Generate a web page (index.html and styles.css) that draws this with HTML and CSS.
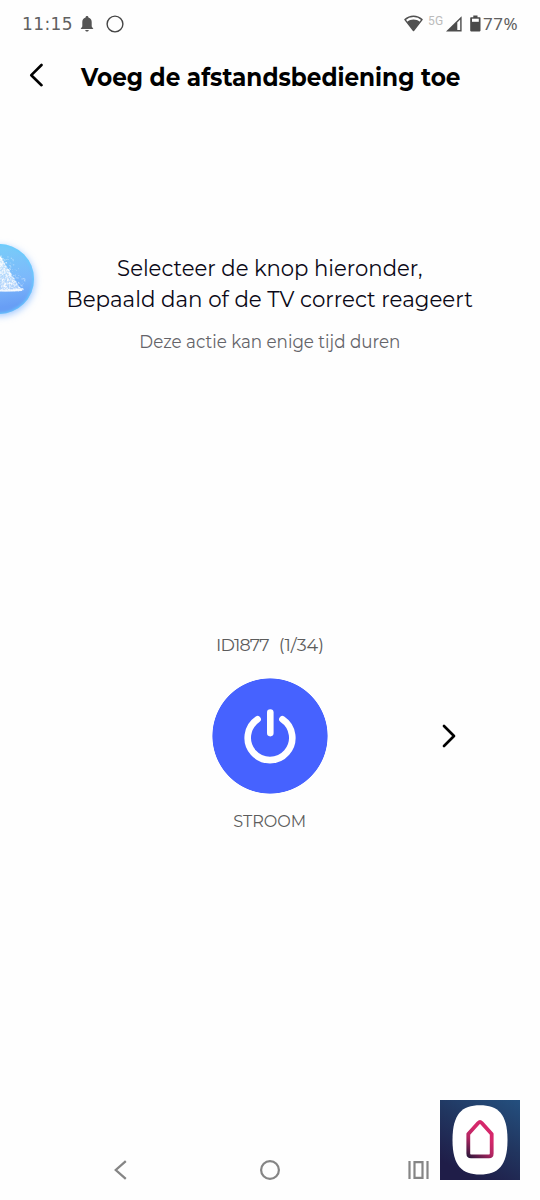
FILE: index.html
```html
<!DOCTYPE html>
<html lang="nl">
<head>
<meta charset="utf-8">
<title>Voeg de afstandsbediening toe</title>
<link rel="stylesheet" href="styles.css">
</head>
<body>
<div class="screen">
  <div class="status">
    <span class="clock">11:15</span>
    <svg class="bell" width="14" height="16" viewBox="0 0 14 16"><path d="M7 0c.9 0 1.400.5 1.400 1.500C10.700 2.200 11.700 4 11.700 6v4.600L13.400 13H.6l1.700-2.400V6c0-2 1-3.800 3.300-4.500C5.600.5 6.100 0 7 0ZM5.200 14h3.600c-.2 1-.9 1.600-1.800 1.600S5.400 15 5.200 14Z" fill="#555"/></svg>
    <svg class="ring" width="18" height="18" viewBox="0 0 18 18"><circle cx="9" cy="9" r="7.900" fill="none" stroke="#444" stroke-width="1.400"/></svg>
    <svg class="wifi" width="19" height="17" viewBox="0 0 19 17"><path d="M1 4.600C5.800.2 13.200.2 18 4.600L9.500 15.500Z" fill="#fff" stroke="#505050" stroke-width="1.500" stroke-linejoin="round"/><path d="M3 7c4-3.200 9-3.200 13 0l-6.500 8.300Z" fill="#505050"/></svg>
    <span class="net">5G</span>
    <svg class="signal" width="17" height="16" viewBox="0 0 17 16"><path d="M0 15.600 15.600.2v15.400Z" fill="#4d4d4d"/><path d="M11.300 6.400 14.200 3.600v10.500h-2.900Z" fill="#fff"/></svg>
    <svg class="battery" width="11" height="17" viewBox="0 0 11 17"><path d="M3.300.6h4.200v1.600h2.200q.8 0 .8.8v12.600q0 .8-.8.8H1q-.8 0-.8-.8V3q0-.8.8-.8h2.300Z" fill="#4a4a4a"/><path d="M2 3.700h6.800v3.100H2Z" fill="#fff"/></svg>
    <span class="percent">77%</span>
  </div>

  <header class="header">
    <svg class="back" width="16" height="24" viewBox="0 0 16 24"><path d="M13.500 2 3.300 12.200 13.500 22.200" fill="none" stroke="#000" stroke-width="2.600" stroke-linecap="round" stroke-linejoin="round"/></svg>
    <h1 class="title">Voeg de afstandsbediening toe</h1>
  </header>

  <main class="content">
    <p class="lead lead-first">Selecteer de knop hieronder,</p>
    <p class="lead lead-second">Bepaald dan of de TV correct reageert</p>
    <p class="hint">Deze actie kan enige tijd duren</p>

    <section class="remote">
      <p class="code"><span class="code-id">ID1877</span><span class="code-count">(1/34)</span></p>
      <div class="controls">
        <button class="power" aria-label="Stroom">
          <svg width="56" height="60" viewBox="0 0 56 60"><g fill="none" stroke="#fff" stroke-width="6.600" stroke-linecap="round"><path d="M15.600 13.300A22.300 22.300 0 1 0 40.400 13.300"/><path d="M28.300 6.500v20.600"/></g></svg>
        </button>
        <svg class="next" width="18" height="28" viewBox="0 0 18 28"><path d="M4 4 14 14 4 24" fill="none" stroke="#000" stroke-width="2.700" stroke-linecap="round" stroke-linejoin="round"/></svg>
      </div>
      <p class="label">STROOM</p>
    </section>
  </main>

  <nav class="nav">
    <svg width="16" height="22" viewBox="0 0 16 22"><path d="M12.800 2.200 2.800 11l10 8.800" fill="none" stroke="#858585" stroke-width="2.300"/></svg>
    <svg width="22" height="22" viewBox="0 0 22 22"><circle cx="11" cy="11" r="8.900" fill="none" stroke="#858585" stroke-width="2.200"/></svg>
    <svg width="22" height="22" viewBox="0 0 22 22"><path d="M1.500 2v18M19.500 2v18M6.500 3.100h8v15.800h-8Z" fill="none" stroke="#858585" stroke-width="2.200"/></svg>
  </nav>

  <div class="assistant">
    <svg width="70" height="70" viewBox="0 0 70 70"><g id="dust" fill="#fff"><path d="M32 6 58 47H32Z" opacity=".4"/><path d="M32 45.500q14 1 27.500-1.500l-1.500 3q-12 1-26 .5Z" opacity=".8"/></g></svg>
  </div>

  <div class="brand">
    <svg width="80" height="80" viewBox="0 0 80 80">
      <defs>
        <linearGradient id="night" x1="1" y1="0" x2=".45" y2="1"><stop offset="0" stop-color="#24507f"/><stop offset=".5" stop-color="#213660"/><stop offset="1" stop-color="#1f1d48"/></linearGradient>
        <linearGradient id="house" gradientUnits="userSpaceOnUse" x1="46" y1="36" x2="29" y2="59"><stop offset="0" stop-color="#d5286b"/><stop offset=".4" stop-color="#b32662"/><stop offset="1" stop-color="#231638"/></linearGradient>
      </defs>
      <path d="M0 0h80v80H0Z" fill="url(#night)"/>
      <path d="M40 5.300C58 5.300 67.500 14 67.500 40S58 74.500 40 74.500 12.500 66 12.500 40 22 5.300 40 5.300Z" fill="#fff"/>
      <path d="M28.300 34 38.200 23Q40 21.200 41.800 23L51.700 34V53.500Q51.700 56.300 49 56.300H31Q28.300 56.300 28.300 53.500Z" fill="none" stroke="url(#house)" stroke-width="3.800" stroke-linejoin="round"/>
    </svg>
  </div>
</div>
<script src="dust.js"></script>
</body>
</html>
```
FILE: styles.css
```css
* { box-sizing: border-box; }
body { margin: 0; background: #fff; }
p, h1 { margin: 0; white-space: nowrap; }
svg { display: block; flex: none; }

.screen {
  position: relative;
  width: 540px;
  height: 1200px;
  overflow: hidden;
  background: #fefefe;
  font-family: Montserrat, Inter, sans-serif;
}

.status {
  display: flex;
  align-items: center;
  height: 47px;
  padding-left: 22px;
  color: #505050;
}
.clock { width: 58px; font: 17px/20px "DejaVu Sans", sans-serif; letter-spacing: .4px; color: #606060; }
.ring { margin-left: 12px; }
.wifi { margin-left: 280px; }
.net { width: 18px; margin: -6px 0 0 5px; font: 12px/14px Roboto, sans-serif; letter-spacing: .2px; color: #bbb; }
.battery { margin-left: 7px; }
.percent { margin-left: 2px; font: 17px/20px "Noto Sans", sans-serif; letter-spacing: .5px; color: #606060; }

.header { display: flex; height: 60px; padding-left: 28px; }
.back { margin-top: 16px; }
.title {
  margin-left: 37px;
  font-size: 24.5px;
  line-height: 60px;
  font-weight: 700;
  color: #000;
  transform: scaleX(.946);
  transform-origin: left;
}

.content { display: flex; flex-direction: column; align-items: center; padding-top: 146px; }
/* The interface face is drawn slightly condensed. */
.lead { font-size: 23px; line-height: 31px; font-weight: 400; color: #0b0917; }
.lead-first { transform: scaleX(.921); }
.lead-second { transform: scaleX(.929); }
.hint { margin-top: 15px; font-size: 17.8px; line-height: 24px; color: #646469; transform: scaleX(.94); }

.remote { display: flex; flex-direction: column; align-items: center; width: 100%; margin-top: 279px; }
.code { display: flex; gap: 10px; font-size: 17.5px; line-height: 24px; color: #5c5c5c; }
.code-id { letter-spacing: -.85px; }
.controls {
  display: grid;
  grid-template-columns: 1fr 116px 1fr;
  align-items: center;
  width: 100%;
  margin-top: 21px;
}
.power {
  grid-column: 2;
  display: grid;
  place-items: center;
  width: 116px;
  height: 116px;
  padding: 0;
  border: 0;
  border-radius: 50%;
  background: radial-gradient(circle, #4662ff 57.2px, transparent 58px);
}
.next { margin-left: 112px; }
.label { margin-top: 15px; font-size: 17.5px; line-height: 24px; color: #5c5c5c; transform: scaleX(.92); }

.nav { display: flex; justify-content: space-between; margin: 326px 110px 0 113px; }
.nav svg:nth-child(2) { margin-left: 3px; }

.assistant {
  position: absolute;
  left: -36px;
  top: 244px;
  width: 70px;
  height: 70px;
  border-radius: 50%;
  background: linear-gradient(170deg, #79caf9 15%, #7cb8fb 55%, #689ef5 85%);
  box-shadow: inset 0 0 3px 1px #66cdff, 1px 2px 7px rgba(100, 165, 255, .6);
}
.brand { position: absolute; left: 440px; top: 1100px; }
```
FILE: dust.js
```js
// Scatter fine white particles over the assistant bubble's triangle.
const layer = document.getElementById('dust');
let seed = 17;
const rnd = () => (seed = (seed * 16807) % 2147483647) / 2147483647;
for (let i = 0; i < 620; i++) {
  const y = 12 + rnd() * 35;
  const spread = i % 5 === 0 ? 11 : 0;
  const edge = Math.min(36 + (y - 12) * 0.63 + spread, 63);
  const x = 34 + rnd() * (edge - 34);
  const dot = document.createElementNS('http://www.w3.org/2000/svg', 'circle');
  dot.setAttribute('cx', x);
  dot.setAttribute('cy', y);
  dot.setAttribute('r', 0.35 + rnd() * 0.35);
  dot.setAttribute('opacity', spread ? 0.3 + rnd() * 0.3 : 0.4 + rnd() * 0.5);
  layer.appendChild(dot);
}
```
